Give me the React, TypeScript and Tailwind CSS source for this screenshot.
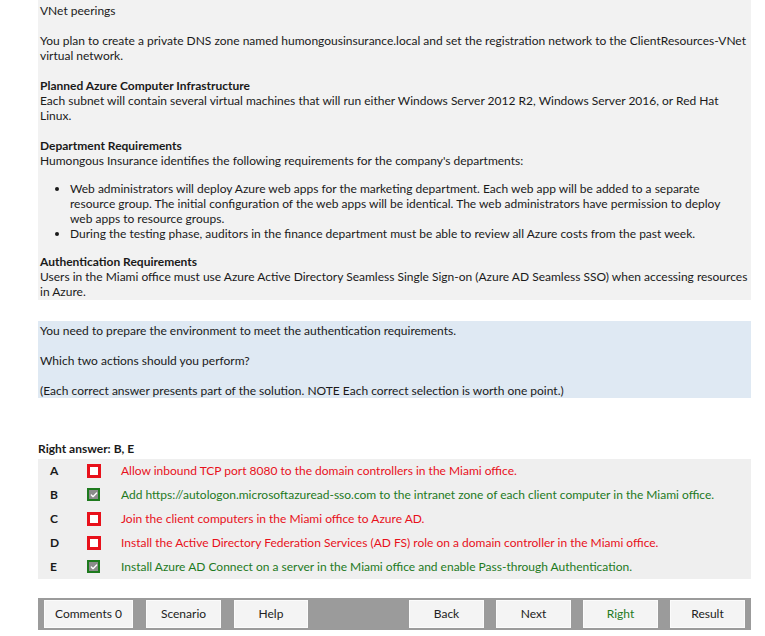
import { Check } from "lucide-react";

const options = [
  { letter: "A", text: "Allow inbound TCP port 8080 to the domain controllers in the Miami office.", correct: false },
  { letter: "B", text: "Add https://autologon.microsoftazuread-sso.com to the intranet zone of each client computer in the Miami office.", correct: true },
  { letter: "C", text: "Join the client computers in the Miami office to Azure AD.", correct: false },
  { letter: "D", text: "Install the Active Directory Federation Services (AD FS) role on a domain controller in the Miami office.", correct: false },
  { letter: "E", text: "Install Azure AD Connect on a server in the Miami office and enable Pass-through Authentication.", correct: true },
];

function Box({ correct }: { correct: boolean }) {
  if (correct) {
    return (
      <div className="w-[13px] h-[13px] bg-[#1e7a1e] flex items-center justify-center">
        <div className="w-[9px] h-[9px] bg-[#8c8c8c] flex items-center justify-center">
          <Check className="w-[8px] h-[8px] text-white" strokeWidth={4} />
        </div>
      </div>
    );
  }
  return <div className="w-[14px] h-[14px] border-[3px] border-[#e8111b] bg-white" />;
}

function Btn({ label, green, w }: { label: string; green?: boolean; w: string }) {
  return (
    <button
      className={`${w} h-[28px] bg-[#f4f4f4] border border-[#fbfbfb] text-[12px] text-center ${
        green ? "text-[#1e7a1e]" : "text-[#222]"
      }`}
    >
      {label}
    </button>
  );
}

export default function App() {
  return (
    <div className="w-[765px] h-[636px] bg-white overflow-hidden font-['Lato',sans-serif] text-[12px] leading-[15px] text-[#1a1a1a]">
      {/* Scenario */}
      <div className="ml-[38px] w-[713px] bg-[#f2f2f2] pl-[2px] pt-[2.5px] pb-[1px] whitespace-nowrap">
        <p>VNet peerings</p>
        <p className="mt-[15px]">
          You plan to create a private DNS zone named humongousinsurance.local and set the registration network to the ClientResources-VNet
          <br />
          virtual network.
        </p>
        <p className="mt-[15px] font-bold">Planned Azure Computer Infrastructure</p>
        <p>
          Each subnet will contain several virtual machines that will run either Windows Server 2012 R2, Windows Server 2016, or Red Hat
          <br />
          Linux.
        </p>
        <p className="mt-[15px] font-bold">Department Requirements</p>
        <p>Humongous Insurance identifies the following requirements for the company's departments:</p>
        <ul className="mt-[13px] pl-[30px] list-disc">
          <li>
            Web administrators will deploy Azure web apps for the marketing department. Each web app will be added to a separate
            <br />
            resource group. The initial configuration of the web apps will be identical. The web administrators have permission to deploy
            <br />
            web apps to resource groups.
          </li>
          <li>During the testing phase, auditors in the finance department must be able to review all Azure costs from the past week.</li>
        </ul>
        <p className="mt-[13px] font-bold">Authentication Requirements</p>
        <p>
          Users in the Miami office must use Azure Active Directory Seamless Single Sign-on (Azure AD Seamless SSO) when accessing resources
          <br />
          in Azure.
        </p>
      </div>

      {/* Question */}
      <div className="ml-[38px] w-[713px] mt-[21px] bg-[#dfe9f3] pl-[2px] pt-[2.5px] h-[77px]">
        <p>You need to prepare the environment to meet the authentication requirements.</p>
        <p className="mt-[15px]">Which two actions should you perform?</p>
        <p className="mt-[15px]">(Each correct answer presents part of the solution. NOTE Each correct selection is worth one point.)</p>
      </div>

      {/* Answers */}
      <p className="ml-[38px] mt-[43.5px] font-bold">Right answer: B, E</p>
      <div className="ml-[38px] w-[713px] mt-[2.5px] bg-[#efefef]">
        {options.map((o) => (
          <div key={o.letter} className="h-[24px] flex items-center">
            <span className="w-[49px] pl-[12px] font-bold">{o.letter}</span>
            <div className="w-[34px] flex">
              <Box correct={o.correct} />
            </div>
            <span className={o.correct ? "text-[#1e7a1e]" : "text-[#e8111b]"}>{o.text}</span>
          </div>
        ))}
      </div>

      {/* Footer */}
      <div className="ml-[38px] w-[713px] mt-[19px] h-[32px] bg-[#9b9b9b] flex items-center px-[6px]">
        <div className="flex gap-[13px]">
          <Btn label="Comments 0" w="w-[89px]" />
          <Btn label="Scenario" w="w-[75px]" />
          <Btn label="Help" w="w-[74px]" />
        </div>
        <div className="ml-auto flex gap-[12px]">
          <Btn label="Back" w="w-[75px]" />
          <Btn label="Next" w="w-[75px]" />
          <Btn label="Right" green w="w-[75px]" />
          <Btn label="Result" w="w-[75px]" />
        </div>
      </div>
    </div>
  );
}
